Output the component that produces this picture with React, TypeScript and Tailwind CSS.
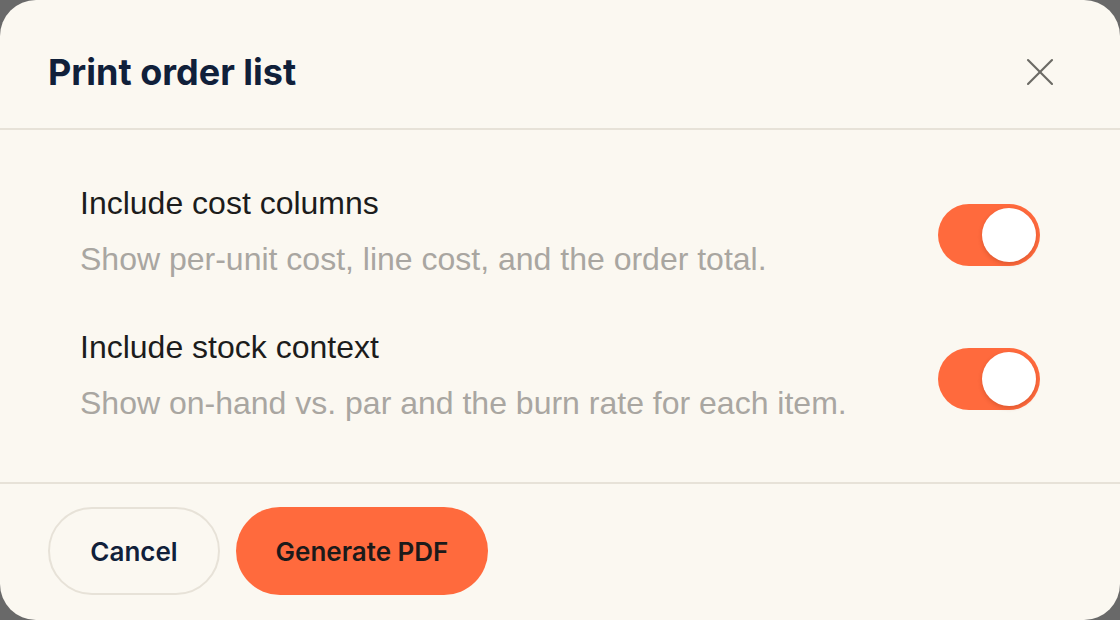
import React, { useState } from "react";

function Toggle({ on, onChange }: { on: boolean; onChange: () => void }) {
  return (
    <button
      type="button"
      onClick={onChange}
      className={`relative flex h-[62px] w-[102px] shrink-0 items-center rounded-full p-[4px] ${
        on ? "justify-end bg-[#ff6a3d]" : "justify-start bg-[#d9d4ca]"
      }`}
    >
      <span className="block h-[54px] w-[54px] rounded-full bg-white shadow-[0_2px_4px_rgba(120,40,10,0.25)]" />
    </button>
  );
}

function Row({
  title,
  desc,
  on,
  onChange,
}: {
  title: string;
  desc: string;
  on: boolean;
  onChange: () => void;
}) {
  return (
    <div className="flex items-start justify-between">
      <div className="flex flex-col font-['Liberation_Sans',Arial,sans-serif] text-[32px]">
        <span className="leading-[45px] text-[#1c1c1c]">{title}</span>
        <span className="mt-[11px] leading-[45px] text-[#a9a6a1]">{desc}</span>
      </div>
      <div className="mt-[23px]">
        <Toggle on={on} onChange={onChange} />
      </div>
    </div>
  );
}

export default function App() {
  const [cost, setCost] = useState(true);
  const [stock, setStock] = useState(true);
  return (
    <div className="h-[620px] w-[1120px] overflow-hidden bg-[#696969]">
      <div className="flex h-[620px] w-[1120px] flex-col overflow-hidden rounded-[36px] bg-[#fbf8f1] font-['Inter',sans-serif]">
        <div className="flex items-center justify-between border-b-2 border-[#e7e2d8] px-[48px] pb-[32px] pt-[48px]">
          <h1 className="text-[36px] font-bold leading-[48px] text-[#10203a]">Print order list</h1>
          <button type="button" className="mr-[8px] flex h-[48px] w-[48px] items-center justify-center text-[#6b6a64]">
            <svg width="48" height="48" viewBox="0 0 24 24" fill="none" stroke="currentColor" strokeWidth="1.05" strokeLinecap="round">
              <path d="M18 6 6 18" />
              <path d="m6 6 12 12" />
            </svg>
          </button>
        </div>
        <div className="flex flex-col gap-[43px] border-b-2 border-[#e7e2d8] px-[80px] pb-[56px] pt-[51px]">
          <Row
            title="Include cost columns"
            desc="Show per-unit cost, line cost, and the order total."
            on={cost}
            onChange={() => setCost(!cost)}
          />
          <Row
            title="Include stock context"
            desc="Show on-hand vs. par and the burn rate for each item."
            on={stock}
            onChange={() => setStock(!stock)}
          />
        </div>
        <div className="flex items-center gap-[16px] px-[48px] pt-[23px]">
          <button
            type="button"
            className="flex h-[88px] w-[172px] items-center justify-center rounded-full border-2 border-[#e7e2d8] text-[26px] font-semibold text-[#10203a]"
          >
            Cancel
          </button>
          <button
            type="button"
            className="flex h-[88px] w-[252px] items-center justify-center rounded-full bg-[#ff6a3d] text-[26px] font-semibold text-[#1c1a1a]"
          >
            Generate PDF
          </button>
        </div>
      </div>
    </div>
  );
}
